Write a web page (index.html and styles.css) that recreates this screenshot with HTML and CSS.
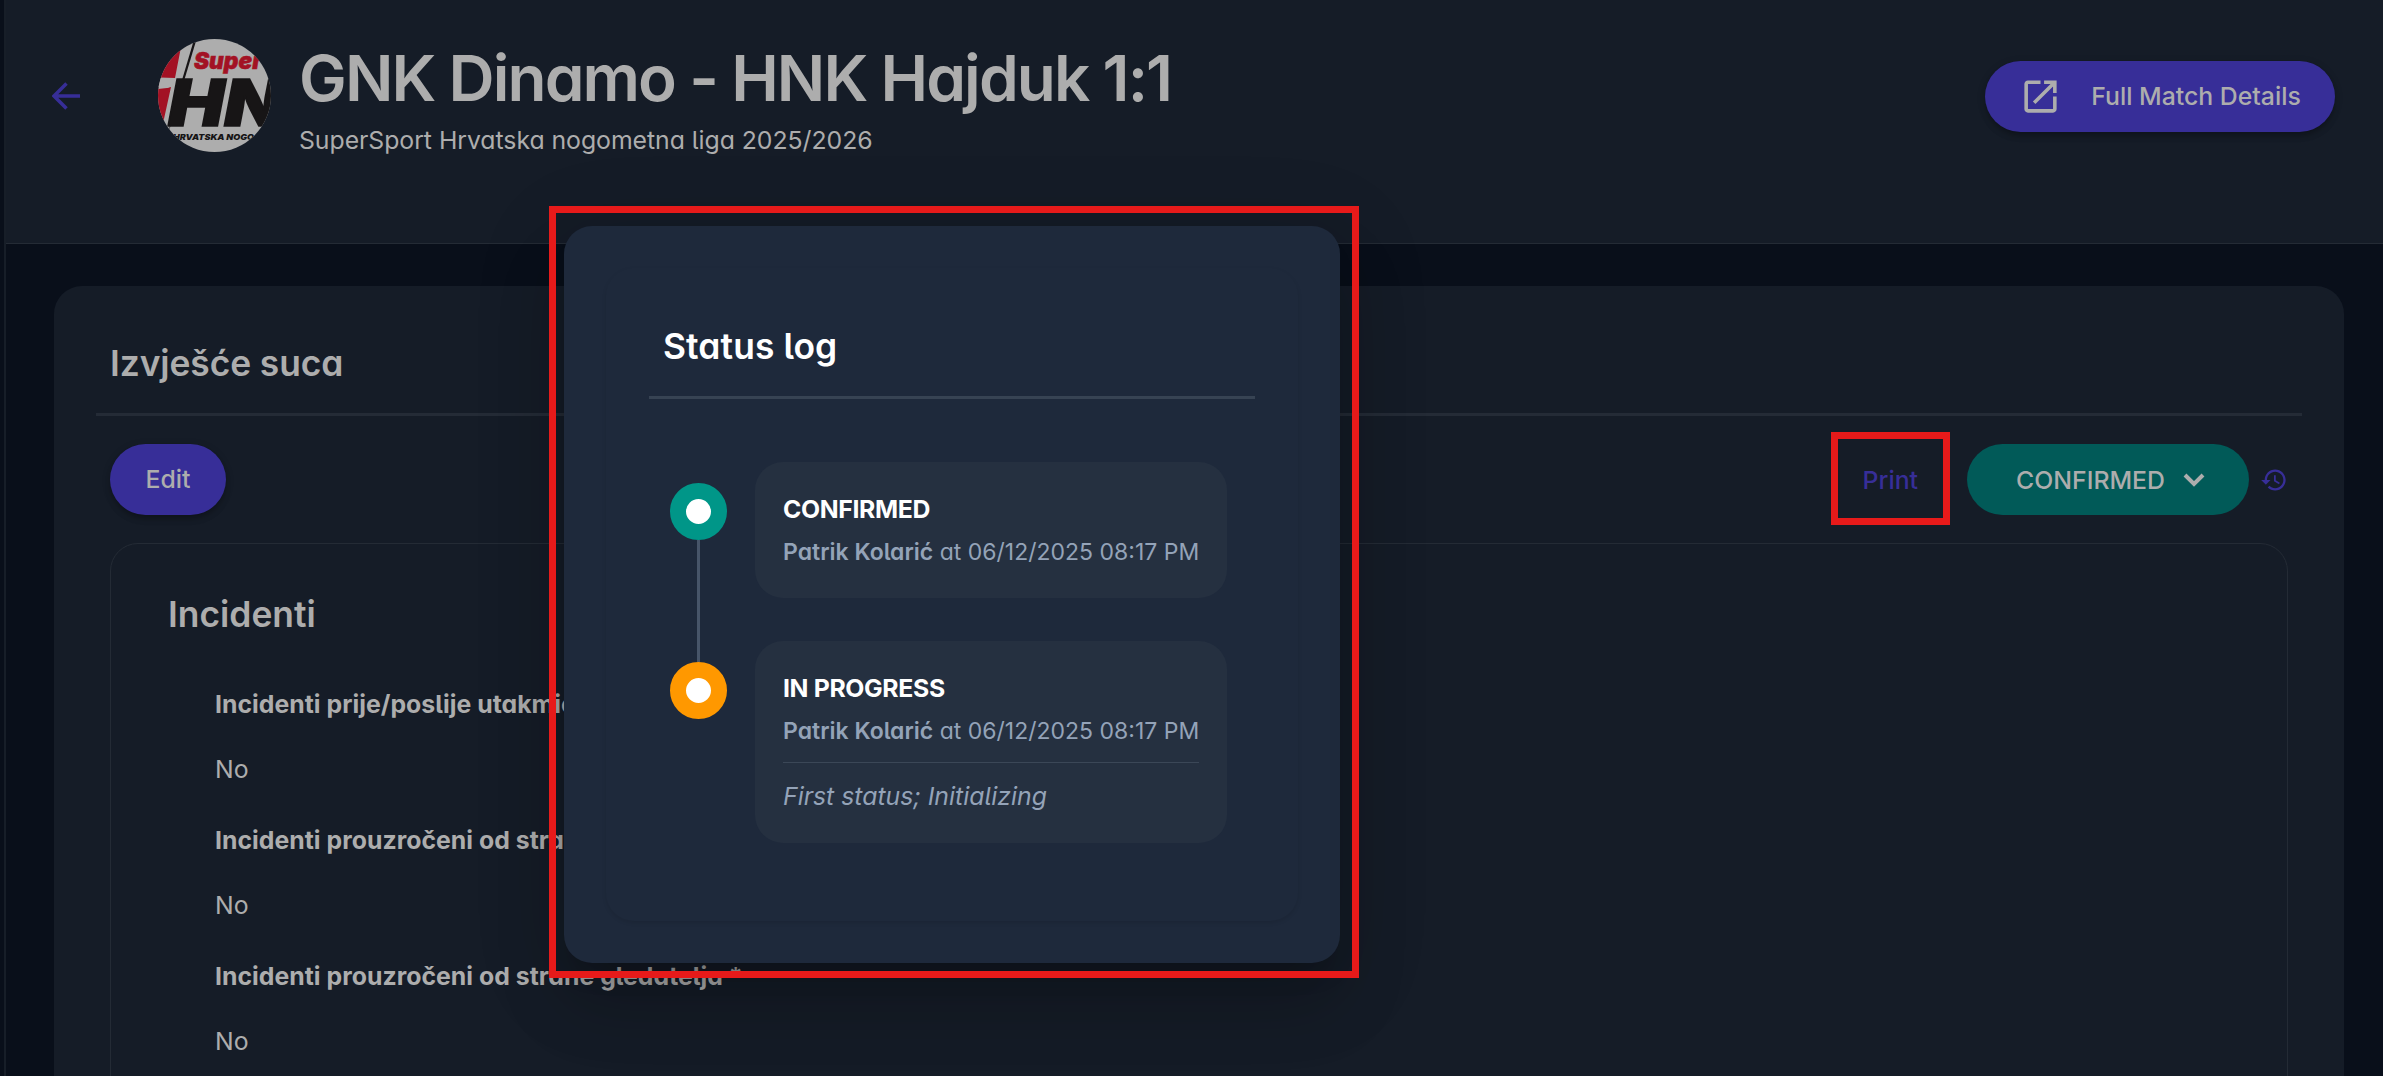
FILE: index.html
```html
<!doctype html>
<html lang="hr">

<head>
    <meta charset="utf-8">
    <meta name="viewport" content="width=device-width, initial-scale=1">
    <title>GNK Dinamo - HNK Hajduk 1:1</title>
    <link rel="stylesheet" href="styles.css">
</head>

<body>
    <div class="page">
        <header class="header">
            <a class="back" href="#">
                <svg viewBox="0 0 28 28"><path d="M28 14H2M14.500 1.500L2 14l12.500 12.500" /></svg>
            </a>
            <svg class="logo" viewBox="0 0 113 113">
                <clipPath id="logoClip"><circle cx="56.500" cy="56.500" r="56.500" /></clipPath>
                <g clip-path="url(#logoClip)">
                    <rect width="113" height="113" fill="#adadad" />
                    <path d="M23 8L17 39L2 38.500L0 50L9 49L13 48L4 89H-5V20Z" fill="#a31224" />
                    <path d="M0 39L17 39L14 47L9 49L0 48Z" fill="#adadad" />
                    <path d="M38 2L26 42L11 92L13 78L35 4Z" fill="#171516" />
                    <text class="logo-super" x="36" y="30" textLength="68" lengthAdjust="spacingAndGlyphs">Super</text>
                    <text class="logo-hn" x="10" y="87" textLength="114" lengthAdjust="spacingAndGlyphs">HN</text>
                    <text class="logo-small" x="15" y="101" textLength="81" lengthAdjust="spacingAndGlyphs">HRVATSKA NOGO</text>
                </g>
            </svg>
            <div class="headline">
                <h1>GNK Dinamo - HNK Hajduk 1:1</h1>
                <p>SuperSport Hrvatska nogometna liga 2025/2026</p>
            </div>
            <button class="btn btn-details">
                <svg viewBox="0 0 24 24"><path d="M19 19H5V5h7V3H5c-1.110 0-2 .9-2 2v14c0 1.100.89 2 2 2h14c1.100 0 2-.9 2-2v-7h-2v7zM14 3v2h3.590l-9.830 9.830 1.410 1.410L19 6.410V10h2V3h-7z" /></svg>
                <span>Full Match Details</span>
            </button>
        </header>

        <main class="card">
            <h2>Izvješće suca</h2>
            <div class="toolbar">
                <button class="btn btn-edit">Edit</button>
                <a class="print" href="#">Print</a>
                <button class="btn btn-status">
                    <span>CONFIRMED</span>
                    <svg viewBox="0 0 22 14"><path d="M2 2l9 9 9-9" /></svg>
                </button>
                <a class="history" href="#">
                    <svg viewBox="0 0 24 24">
                        <path d="M13 3c-4.970 0-9 4.030-9 9H1l3.890 3.890.07.14L9 12H6c0-3.870 3.130-7 7-7s7 3.130 7 7-3.130 7-7 7c-1.930 0-3.680-.79-4.940-2.060l-1.420 1.420C8.270 19.990 10.510 21 13 21c4.970 0 9-4.030 9-9s-4.030-9-9-9zm-1 5v5l4.280 2.540.72-1.210-3.500-2.080V8H12z" />
                    </svg>
                </a>
            </div>
            <section class="report">
                <h3>Incidenti</h3>
                <dl>
                    <dt>Incidenti prije/poslije utakmice *</dt>
                    <dd>No</dd>
                    <dt>Incidenti prouzročeni od strane igrača *</dt>
                    <dd>No</dd>
                    <dt>Incidenti prouzročeni od strane gledatelja *</dt>
                    <dd>No</dd>
                </dl>
            </section>
        </main>
    </div>

    <div class="dialog">
        <div class="dialog-card">
            <h2>Status log</h2>
            <ul class="timeline">
                <li>
                    <div class="marker"><i class="dot confirmed"></i></div>
                    <div class="entry">
                        <h4>CONFIRMED</h4>
                        <p><b>Patrik Kolarić</b> at 06/12/2025 08:17 PM</p>
                    </div>
                </li>
                <li>
                    <div class="marker"><i class="dot progress"></i></div>
                    <div class="entry">
                        <h4>IN PROGRESS</h4>
                        <p><b>Patrik Kolarić</b> at 06/12/2025 08:17 PM</p>
                        <p class="note">First status; Initializing</p>
                    </div>
                </li>
            </ul>
        </div>
    </div>

    <!-- red frames -->
    <div class="frame frame-dialog"></div>
    <div class="frame frame-print"></div>
</body>

</html>
```
FILE: styles.css
```css
* {
    box-sizing: border-box;
    margin: 0;
    padding: 0;
}
body {
    height: 1076px;
    overflow: hidden;
    background: #090f1a;
    color: #adadad;
    font: 400 24.800px/36px Inter, sans-serif;
    font-feature-settings: "cv11", "cv05";
}
a {
    text-decoration: none;
}
.page {
    height: 1076px;
    margin-left: 4px;
    border-left: 2px solid #171e28;
    overflow: hidden;
}

/* header */
.header {
    display: flex;
    align-items: flex-start;
    height: 244px;
    padding: 0 48px 0 46px;
    background: #151c27;
    border-bottom: 1px solid #242b35;
}
.back {
    width: 28px;
    height: 28px;
    margin-top: 82px;
}
.back svg {
    display: block;
    fill: none;
    stroke: #372e98;
    stroke-width: 3.500;
}
.logo {
    width: 113px;
    height: 113px;
    margin: 39px 28px 0 78px;
}
.logo text {
    font-style: italic;
    font-weight: 900;
    font-feature-settings: normal;
}
.logo-super {
    font-size: 23px;
    fill: #a31224;
    stroke: #a31224;
    stroke-width: .6;
}
.logo-hn {
    font-size: 65px;
    fill: #171516;
    stroke: #171516;
    stroke-width: 1.500;
}
.logo-small {
    font-size: 8px;
    fill: #171516;
}
.headline {
    flex: 1;
    padding-top: 38px;
}
.headline h1 {
    margin-bottom: 4px;
    font-size: 63.800px;
    line-height: 80px;
    font-weight: 600;
    letter-spacing: -1.900px;
}
.headline p {
    letter-spacing: -0.04px;
}

/* buttons */
.btn {
    display: flex;
    align-items: center;
    justify-content: center;
    height: 71px;
    border: 0;
    border-radius: 36px;
    background: #372e98;
    color: #adadad;
    font: 500 24.800px/36px Inter, sans-serif;
    box-shadow: 0 5px 7px -2px rgba(0, 0, 0, .25), 0 2px 9px rgba(0, 0, 0, .15);
}
.btn-details {
    width: 350px;
    margin-top: 61px;
    padding-bottom: 1px;
    gap: 29px;
}
.btn-details svg {
    width: 43px;
    height: 43px;
    fill: #adadad;
}
.btn-edit {
    width: 116px;
    margin-right: auto;
    padding-bottom: 1px;
}
.btn-status {
    width: 282px;
    gap: 18px;
    margin-left: 49px;
    padding-left: 5px;
    background: #015a58;
    box-shadow: none;
}
.btn-status svg {
    width: 22px;
    height: 14px;
    fill: none;
    stroke: #adadad;
    stroke-width: 4;
}

/* report */
.card {
    height: 800px;
    margin: 42px 39px 0 48px;
    padding: 54px 42px 0;
    border-radius: 28px 28px 0 0;
    background: #151c27;
}
.card h2,
.dialog h2 {
    font-size: 35.400px;
    line-height: 48px;
    font-weight: 600;
}
.card h2 {
    padding: 0 0 25px 14px;
    border-bottom: 3px solid #242b36;
    letter-spacing: -0.1px;
}
.toolbar {
    display: flex;
    align-items: center;
    margin: 28px 14px;
}
.print {
    color: #372e98;
    font-weight: 500;
    font-feature-settings: normal;
}
.history {
    width: 28px;
    height: 28px;
    margin-left: 11px;
}
.history svg {
    display: block;
    fill: #372e98;
}
.report {
    height: 600px;
    margin: 0 14px;
    padding: 47px 57px 0;
    border: 1px solid #242b35;
    border-radius: 28px;
}
.report h3 {
    margin-bottom: 47px;
    font-size: 35.400px;
    line-height: 48px;
    font-weight: 600;
}
.report dl {
    padding-left: 47px;
}
.report dt {
    font-weight: 700;
    letter-spacing: 0.03px;
    margin-bottom: 29px;
}
.report dd {
    margin-bottom: 35px;
}

/* status log dialog */
.dialog {
    position: absolute;
    left: 564px;
    top: 226px;
    width: 776px;
    height: 737px;
    padding: 42px;
    border-radius: 28px;
    background: #1e293b;
    color: #fff;
    box-shadow: 0 19px 27px -12px rgba(0, 0, 0, .2), 0 42px 67px 5px rgba(0, 0, 0, .14), 0 16px 81px 14px rgba(0, 0, 0, .12);
}
.dialog-card {
    height: 653px;
    padding: 55px 43px 0;
    border-radius: 28px;
    box-shadow: 0 2px 4px rgba(0, 0, 0, .1);
}
.dialog h2 {
    padding: 0 0 25px 14px;
    border-bottom: 3px solid #374353;
    letter-spacing: 0.1px;
}
.timeline {
    margin: 63px 28px 0 21px;
    list-style: none;
}
.timeline li {
    display: flex;
    gap: 28px;
    padding-bottom: 43px;
}
.marker {
    position: relative;
    width: 57px;
    padding-top: 21px;
}
.timeline li:first-child .marker::after {
    content: "";
    position: absolute;
    left: 27px;
    top: 78px;
    width: 3px;
    height: 122px;
    background: #475569;
}
.dot {
    display: block;
    width: 57px;
    height: 57px;
    border: 16px solid;
    border-radius: 50%;
    background: #fff;
}
.confirmed {
    border-color: #009688;
}
.progress {
    border-color: #ff9800;
}
.entry {
    flex: 1;
    padding: 29px 28px 28px;
    border-radius: 28px;
    background: #253040;
}
.entry h4 {
    margin-bottom: 7px;
    font-size: 24.800px;
    line-height: 36px;
    font-weight: 700;
    letter-spacing: -0.35px;
}
.entry p {
    color: #94a3b8;
    font-size: 23px;
    line-height: 36px;
    white-space: nowrap;
}
.entry b {
    font-weight: 600;
}
.entry .note {
    margin-top: 13px;
    padding-top: 15px;
    border-top: 1px solid #3b4757;
    font-size: 24.800px;
    line-height: 37px;
    font-style: italic;
}

.frame {
    position: absolute;
    border: 7px solid #e71a1a;
}
.frame-dialog {
    left: 549px;
    top: 206px;
    width: 810px;
    height: 772px;
}
.frame-print {
    left: 1831px;
    top: 432px;
    width: 119px;
    height: 93px;
}
```
